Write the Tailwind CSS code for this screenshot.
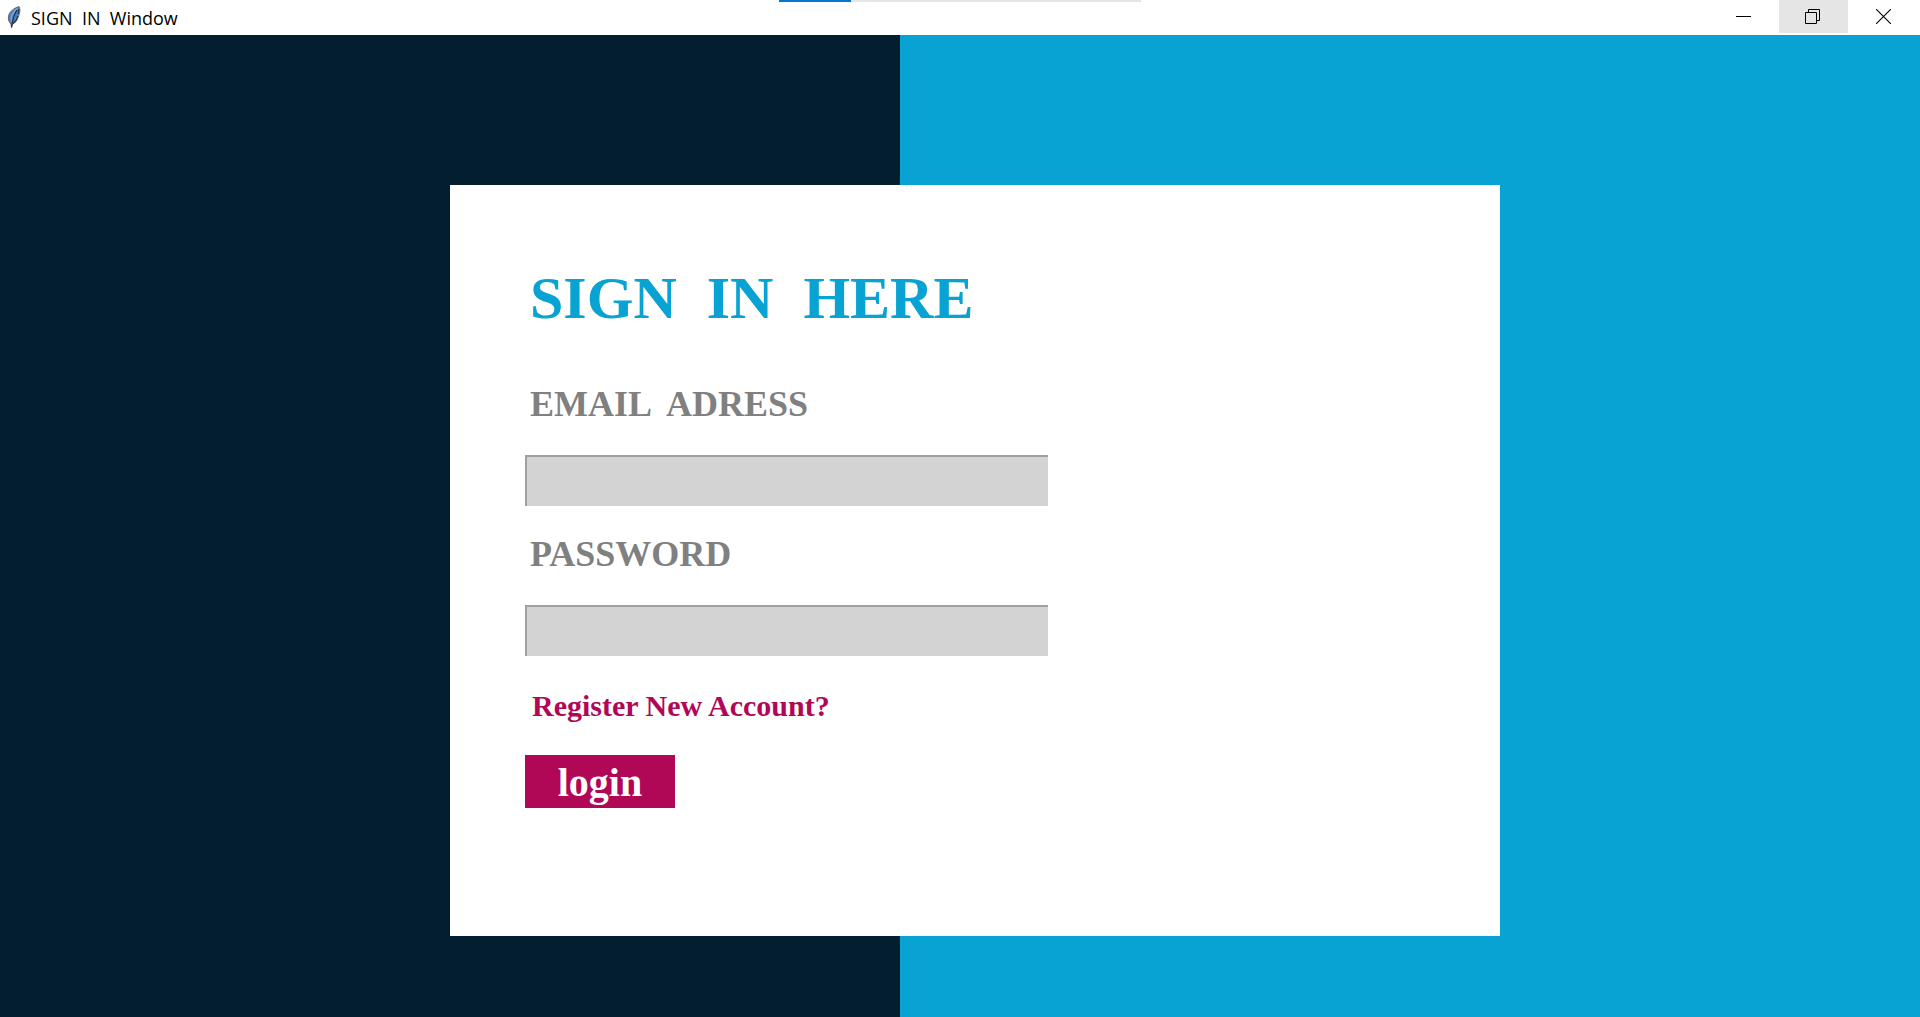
<!DOCTYPE html>
<html lang="en">
<head>
<meta charset="utf-8">
<title>SIGN IN Window</title>
<script src="https://cdn.jsdelivr.net/npm/@tailwindcss/browser@4"></script>
</head>
<body class="flex min-h-screen flex-col bg-white font-['Liberation_Serif',serif]">
<header class="relative flex h-[35px] items-start bg-white">
  <div class="flex h-9 flex-1 items-center gap-2 pl-[7px]">
    <svg class="h-6 w-4" viewBox="0 0 16 24" aria-hidden="true">
      <path d="M4.500 22 4 18.500Q0 14 1.500 9.500 4 3 12 .500 14 4 11.500 10.500 10 16 5.500 18.500Z" fill="#4a80c4" stroke="#6b6b6b" stroke-width="1"/>
      <path d="M4.500 16Q3.500 12 5.500 8 7.500 4 10.500 2.500" fill="none" stroke="#6ea6e6" stroke-width="1.500"/>
      <path d="M11 10 9 14.500 6 17.500M12 3 11 8" fill="none" stroke="#26354a" stroke-width="1.200"/>
      <path d="M10 4Q6 10 4.500 21" fill="none" stroke="#1a1a1a" stroke-width="1"/>
    </svg>
    <h1 class="whitespace-pre font-['Open_Sans',sans-serif] text-[18px] leading-6 text-black">SIGN  IN  Window</h1>
  </div>
  <div class="absolute left-[40.57%] top-0 flex h-[2px] w-[18.85%] bg-[#e5e5e5]"><div class="w-1/5 bg-[#0078d7]"></div></div>
  <div class="flex h-[33px]">
    <button type="button" aria-label="Minimize" class="flex w-[70px] items-center justify-center pr-[2px]"><svg width="15" height="15" viewBox="0 0 15 15"><path d="M0 7.500H15" stroke="#000"/></svg></button>
    <button type="button" aria-label="Restore" class="flex w-[69px] items-center justify-center bg-[#e5e5e5] pr-[2px]"><svg width="15" height="15" viewBox="0 0 15 15" fill="none" stroke="#000"><path d="M.500 3.500H11.500V14.500H.500ZM3.500 3.500V.500H14.500V11.500H11.500"/></svg></button>
    <button type="button" aria-label="Close" class="flex w-[72px] items-center justify-center pr-[2px]"><svg width="15" height="15" viewBox="0 0 15 15" stroke="#000" stroke-width="1.100"><path d="M0 0 15 15M15 0 0 15"/></svg></button>
  </div>
</header>
<main class="flex-1 bg-[linear-gradient(to_right,#021e2f_46.875%,#08a3d2_46.875%)] pb-20 pl-[23.4375%] pt-[150px]">
  <form class="flex w-[71.43%] flex-col items-start bg-white pb-32 pl-[75px] pt-[77px]">
    <h2 class="whitespace-pre pl-[5px] text-[60px] font-bold leading-[72px] text-[#08a3d2]">SIGN  IN  HERE</h2>
    <label for="email" class="mt-[50px] whitespace-pre pl-[5px] text-[36px] font-bold leading-10 text-[#808080]">EMAIL  ADRESS</label>
    <input id="email" type="email" class="mt-[31px] h-[51px] w-[53.69%] border-l-2 border-t-2 border-[#a0a0a0] bg-[#d3d3d3] px-1 text-[30px] outline-none">
    <label for="password" class="mt-7 pl-[5px] text-[36px] font-bold leading-10 text-[#808080]">PASSWORD</label>
    <input id="password" type="password" class="mt-[31px] h-[51px] w-[53.69%] border-l-2 border-t-2 border-[#a0a0a0] bg-[#d3d3d3] px-1 text-[30px] outline-none">
    <a href="#" class="mt-[30px] pl-[7px] text-[30px] font-bold leading-10 text-[#b00857]">Register New Account?</a>
    <button type="submit" class="mt-[29px] h-[53px] w-[150px] bg-[#b00857] pt-[3px] text-[40px] font-bold leading-[48px] text-white">login</button>
  </form>
</main>
</body>
</html>
